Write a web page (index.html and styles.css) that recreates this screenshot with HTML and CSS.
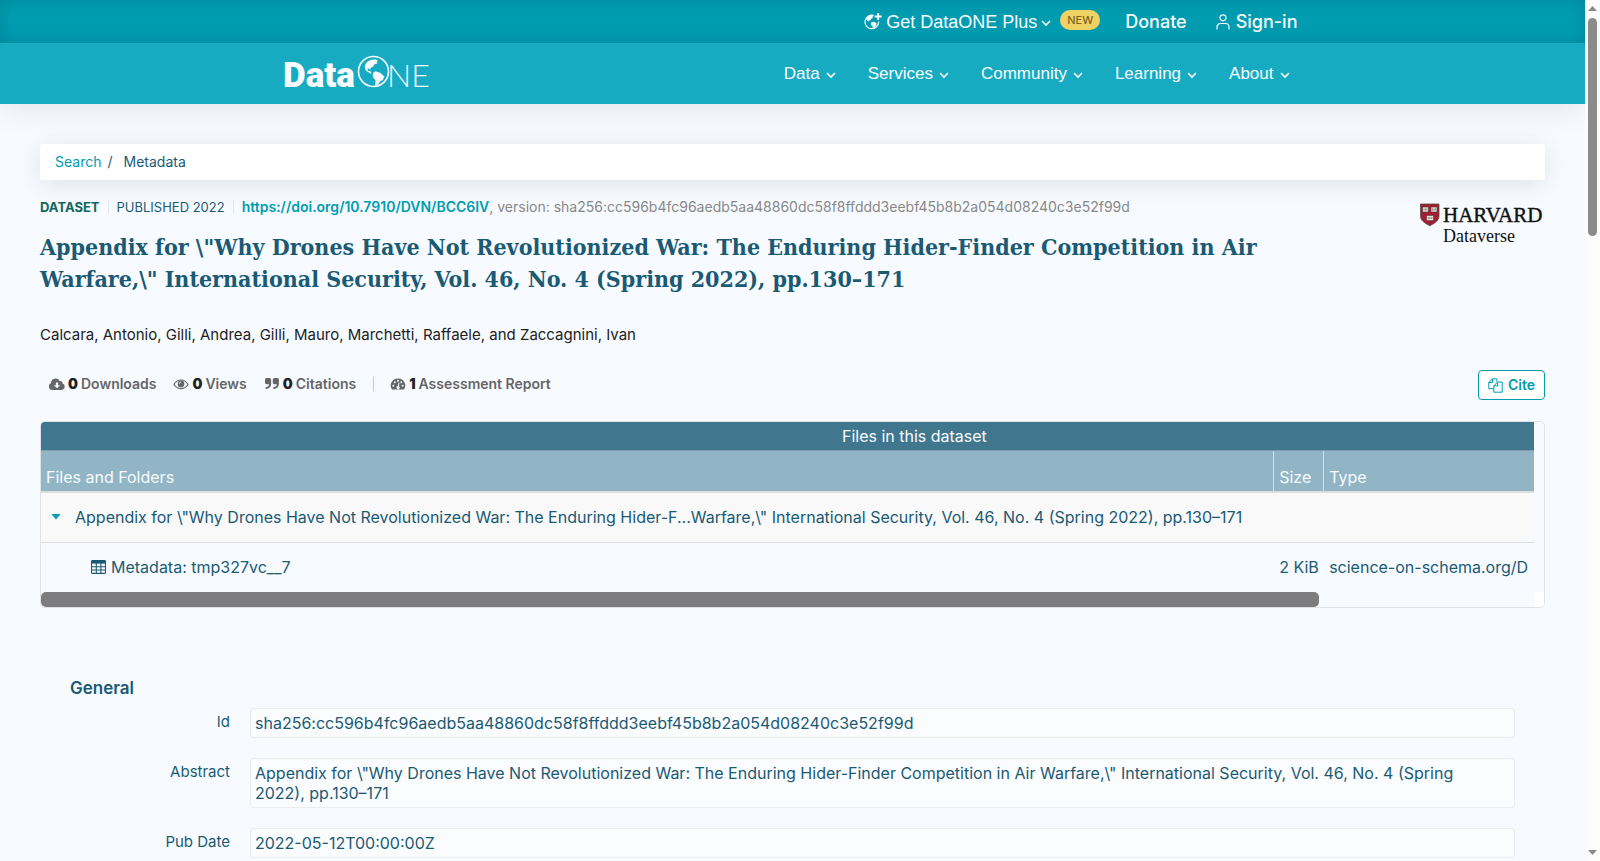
FILE: index.html
```html
<!DOCTYPE html>
<html lang="en">
<head>
<meta charset="utf-8">
<title>DataONE dataset</title>
<link rel="stylesheet" href="styles.css">
</head>
<body>
<div class="window">
  <div class="page">
    <header class="header">
      <div class="topbar">
        <nav class="wrap top-nav" aria-label="Account">
          <button type="button" class="nav-btn plus">
            <svg class="i-globe" viewBox="0 0 18 17" aria-hidden="true">
              <path d="M14.600 8.600a6.800 6.800 0 1 1-5-6.300" fill="none" stroke="currentColor" stroke-width="1.200"/>
              <path d="M14.200 0v7M10.700 3.500h7" stroke="currentColor" stroke-width="1.800"/>
              <path d="M3 4.600C4 3 6 2 8.600 2.200l1 1-1.400.7.8 1.200-2 1-.9 1.600-1.700-.3.6 1.400L3 7.600 2.200 6zM7.400 9l3-.2 2.200 1.600-.6 2.400-2 2-.9 1.200-.5-2.600L6.900 12z" fill="currentColor"/>
            </svg>
            <span>Get DataONE Plus</span>
            <svg class="chev" viewBox="0 0 10 10" aria-hidden="true"><path d="M1 3l4 4 4-4"/></svg>
          </button>
          <span class="badge">NEW</span>
          <a class="top-link donate" href="#">Donate</a>
          <a class="top-link signin" href="#">
            <svg class="i-user" viewBox="0 0 14 16" aria-hidden="true"><circle cx="7" cy="3.800" r="3"/><path d="M1 15.500V13a3.500 3.500 0 0 1 3.500-3.500h5A3.500 3.500 0 0 1 13 13v2.500"/></svg>
            <span>Sign-in</span>
          </a>
        </nav>
      </div>
      <div class="mainbar">
        <div class="wrap main-nav">
          <a class="logo" href="#" aria-label="DataONE">
            <svg viewBox="0 0 144 34" aria-hidden="true">
              <text class="logo-bold" x="-2" y="30">Data</text>
              <circle cx="88.500" cy="14.500" r="15" fill="none" stroke="currentColor" stroke-width="1.600"/>
              <path d="M80.500 7c2-3.500 6-5 10.500-4.500l2 1.200-1.500 1.300 1 1.500-3 .8-1.500 2.400-2.200.8-.5 2-1.800-1-1.200.8 1 1.600 1.800.2 1.800 2.200-1.600.2-3.800-2.600-1.500-2-.2-3zM88 16l2.500-1.800 5 1.800 3.800 3.500-1.300 3.300-3.200 2-1.600 2.600-3.200 1.600.6-5.400-2.800-3.600z" fill="currentColor"/>
              <text class="logo-thin" x="102" y="30">NE</text>
            </svg>
          </a>
          <nav class="menu" aria-label="Main">
            <button type="button" class="nav-btn">Data<svg class="chev" viewBox="0 0 10 10" aria-hidden="true"><path d="M1 3l4 4 4-4"/></svg></button>
            <button type="button" class="nav-btn">Services<svg class="chev" viewBox="0 0 10 10" aria-hidden="true"><path d="M1 3l4 4 4-4"/></svg></button>
            <button type="button" class="nav-btn">Community<svg class="chev" viewBox="0 0 10 10" aria-hidden="true"><path d="M1 3l4 4 4-4"/></svg></button>
            <button type="button" class="nav-btn">Learning<svg class="chev" viewBox="0 0 10 10" aria-hidden="true"><path d="M1 3l4 4 4-4"/></svg></button>
            <button type="button" class="nav-btn">About<svg class="chev" viewBox="0 0 10 10" aria-hidden="true"><path d="M1 3l4 4 4-4"/></svg></button>
          </nav>
        </div>
      </div>
    </header>

    <main class="content">
      <nav class="crumbs" aria-label="Breadcrumb">
        <a href="#">Search</a><span>/</span><span class="here">Metadata</span>
      </nav>

      <section class="intro">
        <div class="intro-text">
          <p class="meta"><strong class="kind">DATASET</strong><span class="rule"></span><span class="published">PUBLISHED 2022</span><span class="rule"></span><span class="cite-id"><a href="#">https://doi.org/10.7910/DVN/BCC6IV</a>, version: sha256:cc596b4fc96aedb5aa48860dc58f8ffddd3eebf45b8b2a054d08240c3e52f99d</span></p>
          <h1 class="title">Appendix for \"Why Drones Have Not Revolutionized War: The Enduring Hider-Finder Competition in Air Warfare,\" International Security, Vol. 46, No. 4 (Spring 2022), pp.130–171</h1>
        </div>
        <svg class="harvard" viewBox="0 0 125 42" role="img" aria-label="Harvard Dataverse">
          <path d="M.5 1h18.500v12c0 4.500-4 7-9.200 9.800C4.500 20 .5 17.500 .5 13z" fill="#a51c30" stroke="#544b45" stroke-width=".8"/>
          <g fill="#e8e4dd" stroke="#4d3a36" stroke-width=".6"><path d="M2.500 4h6v5h-6zM11 4h6v5h-6zM6.500 12.500h7v5h-7z"/><path d="M4 5.500v2M5.500 5.500v2M7 5.500v2M12.500 5.500v2M14 5.500v2M15.500 5.500v2M8.200 14v2M10 14v2M11.800 14v2"/></g>
          <text class="hv-big" x="23" y="19">HARVARD</text>
          <text class="hv-small" x="23" y="39">Dataverse</text>
        </svg>
      </section>

      <p class="authors">Calcara, Antonio, Gilli, Andrea, Gilli, Mauro, Marchetti, Raffaele, and Zaccagnini, Ivan</p>

      <section class="actions">
        <ul class="metrics">
          <li><svg viewBox="0 0 16 14" aria-hidden="true"><path fill-rule="evenodd" d="M3.500 13A3.500 3.500 0 0 1 2 6.300 4.600 4.600 0 0 1 10.600 4a2.400 2.400 0 0 1 2.900 2.600A3.300 3.300 0 0 1 12.700 13zM6.900 5.500v2.700h-2L8 11.300l3.100-3.100h-2V5.500z"/></svg><b>0</b><span>Downloads</span></li>
          <li><svg viewBox="0 0 16 14" aria-hidden="true"><path d="M1 7.500C4.500 1.500 11.500 1.500 15 7.500 11.500 13 4.500 13 1 7.500z" fill="none" stroke="currentColor" stroke-width="1.200"/><circle cx="8" cy="6.900" r="3.300"/><path d="M6.200 6.800A1.900 1.900 0 0 1 8 5" fill="none" stroke="#f7fbff" stroke-width=".9"/></svg><b>0</b><span>Views</span></li>
          <li><svg viewBox="0 0 16 14" aria-hidden="true"><path d="M2.500 1h3A1.600 1.600 0 0 1 7.100 2.600V7A5 5 0 0 1 2.100 12h-.5v-1.900h.5A3 3 0 0 0 5 7.300H2.600A1.700 1.700 0 0 1 1 5.600V2.600A1.600 1.600 0 0 1 2.500 1zM10.300 1h3A1.600 1.600 0 0 1 14.900 2.600V7a5 5 0 0 1-5 5h-.5v-1.900h.5a3 3 0 0 0 2.900-2.800h-2.400a1.700 1.700 0 0 1-1.600-1.700V2.600A1.600 1.600 0 0 1 10.300 1z"/></svg><b>0</b><span>Citations</span></li>
          <li class="assess"><svg viewBox="0 0 16 14" aria-hidden="true"><path d="M8 1.500a7 7 0 0 0-6 11h12a7 7 0 0 0-6-11z"/><g fill="#f7fbff"><circle cx="3.300" cy="8.700" r="1"/><circle cx="4.800" cy="5.200" r="1"/><circle cx="8" cy="3.800" r="1"/><circle cx="11.300" cy="5.200" r="1"/><circle cx="12.700" cy="8.700" r="1"/><path d="M8.600 5.500l.9.200-.6 3.500a1.600 1.600 0 1 1-1.200-.2z"/></g></svg><b>1</b><span>Assessment Report</span></li>
        </ul>
        <button type="button" class="cite"><svg viewBox="0 0 15 15" aria-hidden="true"><path d="M4.500.800h4.300v3M4.500.800L.800 4.500v6.200h5M4.500.800v3.700H.800M9.700 4h4.500v10.200H5.800V7.900zM9.700 4v3.900H5.800"/></svg>Cite</button>
      </section>

      <section class="files">
        <div class="files-view">
          <table class="files-table">
            <colgroup><col><col class="c-size"><col class="c-type"></colgroup>
            <caption>Files in this dataset</caption>
            <thead><tr><th scope="col">Files and Folders</th><th scope="col">Size</th><th scope="col">Type</th></tr></thead>
            <tbody>
              <tr class="folder"><td colspan="3"><div class="cell"><button type="button" class="toggle" aria-label="Collapse folder"></button><span>Appendix for \"Why Drones Have Not Revolutionized War: The Enduring Hider-F...Warfare,\" International Security, Vol. 46, No. 4 (Spring 2022), pp.130–171</span></div></td></tr>
              <tr class="file"><td><div class="cell file-name"><svg class="i-table" viewBox="0 0 15 14" aria-hidden="true"><path d="M1.500.600h12a1 1 0 0 1 1 1V12.400a1 1 0 0 1-1 1h-12a1 1 0 0 1-1-1V1.600a1 1 0 0 1 1-1zM.500 6.700h14M.500 10h14M5.300 2.500v11M9.900 2.500v11" fill="none" stroke="currentColor" stroke-width="1.100"/><path d="M.500.600h14v3H.500z" fill="currentColor"/></svg><span>Metadata: tmp327vc__7</span></div></td><td>2 KiB</td><td>science-on-schema.org/D</td></tr>
            </tbody>
          </table>
        </div>
        <div class="hscroll"><div class="hthumb"></div></div>
      </section>

      <section class="general">
        <h2>General</h2>
        <dl>
          <dt>Id</dt><dd>sha256:cc596b4fc96aedb5aa48860dc58f8ffddd3eebf45b8b2a054d08240c3e52f99d</dd>
          <dt>Abstract</dt><dd>Appendix for \"Why Drones Have Not Revolutionized War: The Enduring Hider-Finder Competition in Air Warfare,\" International Security, Vol. 46, No. 4 (Spring 2022), pp.130–171</dd>
          <dt>Pub Date</dt><dd>2022-05-12T00:00:00Z</dd>
        </dl>
      </section>
    </main>
  </div>
  <div class="vscroll" aria-hidden="true"><span class="arrow up"></span><div class="track"><div class="vthumb"></div></div><span class="arrow down"></span></div>
</div>
</body>
</html>
```
FILE: styles.css
```css
* { box-sizing: border-box; }
body { margin: 0; background: #f7fbff; color: #1a5a74; font: 16px/20px Inter, "Open Sans", sans-serif; }
a { color: #019cb0; text-decoration: none; }
button { font: inherit; color: inherit; background: none; border: 0; padding: 0; }
h1, h2, p, ul, dl, dd { margin: 0; }
.window { display: grid; grid-template-columns: minmax(0, 1fr) 15px; height: 100vh; }
.page { overflow: hidden; }

.header { color: #f7fbff; box-shadow: 0 2px 32px rgba(0, 0, 0, .1); }
.wrap { max-width: 1016px; margin: 0 auto; display: flex; align-items: center; }
.topbar { background: #019cb0; box-shadow: inset 0 0 16px rgba(0, 70, 90, .25); }
.top-nav { height: 43px; justify-content: flex-end; padding-right: 3px; }
.nav-btn { display: flex; align-items: center; gap: 6px; font: 17px/20px "Liberation Sans", Arial, sans-serif; }
.plus { gap: 4px; font-size: 18px; }
.chev { width: 10px; height: 10px; margin-top: 2px; fill: none; stroke: currentColor; stroke-width: 1.6; }
.i-globe { width: 18px; height: 17px; }
.badge { margin: 0 25px 3px 9px; padding: 0 7px; border-radius: 10px; background: #f0d264; color: #7a6820; font-size: 11px; font-weight: 500; line-height: 20px; }
.top-link { color: #f7fbff; font-size: 18px; font-weight: 500; line-height: 22px; }
.signin { display: flex; align-items: center; gap: 6px; margin-left: 29px; }
.i-user { width: 14px; height: 16px; fill: none; stroke: currentColor; stroke-width: 1.2; }
.mainbar { background: #17abc1; }
.main-nav { height: 61px; justify-content: space-between; }
.logo { color: #f7fbff; }
.logo svg { display: block; width: 144px; height: 34px; fill: currentColor; overflow: visible; }
.logo-bold { font: 900 35px Roboto, sans-serif; }
.logo-thin { font: 300 32px Lato, sans-serif; }
.menu { display: flex; gap: 32px; padding-right: 11px; }

.content { padding: 40px 40px 0; }
.crumbs { display: flex; gap: 6px; padding: 8px 15px; background: #fff; border-radius: 3px; box-shadow: 0 4px 24px rgba(0, 0, 0, .1); font-size: 14px; }
.here { margin-left: 5px; }
.intro { display: flex; justify-content: space-between; align-items: flex-start; padding-top: 17px; }
.intro-text { flex: 0 1 1270px; }
.meta { display: flex; align-items: center; font-size: 13px; }
.kind { color: #12665c; }
.rule { width: 1px; height: 14px; margin: 0 8px; background: #e4e6e8; }
.cite-id { color: #888; font-size: 14px; }
.cite-id a { font-weight: 600; }
.title { margin-top: 14px; font: 700 23px/32px "DejaVu Serif Condensed", "DejaVu Serif", serif; }
.harvard { width: 125px; height: 42px; margin-top: 6px; flex: none; }
.hv-big { font: 21px "Liberation Serif", serif; fill: #111; stroke: #111; stroke-width: .4; }
.hv-small { font: 18px "Liberation Serif", serif; fill: #111; }
.authors { margin-top: 30px; color: #222; font-size: 15px; }
.actions { display: flex; justify-content: space-between; align-items: center; margin-top: 25px; }
.metrics { display: flex; list-style: none; padding: 0 0 2px 9px; gap: 17px; color: #666; font-size: 14px; font-weight: 600; }
.metrics li { display: flex; align-items: center; gap: 3px; }
.metrics svg { width: 16px; height: 14px; fill: currentColor; }
.metrics b { color: #222; }
.metrics .assess { position: relative; padding-left: 17px; }
.assess::before { content: ""; position: absolute; left: 0; top: 3px; width: 1px; height: 14px; background: #c8cacc; }
.cite { display: flex; align-items: center; gap: 5px; height: 30px; padding: 0 9px; border: 1px solid #019cb0; border-radius: 4px; background: #fff; color: #019cb0; font-size: 14px; font-weight: 600; }
.cite svg { width: 15px; height: 15px; fill: none; stroke: currentColor; stroke-width: 1; }

.files { margin-top: 21px; border: 1px solid #dfe3e6; border-radius: 5px; overflow: hidden; }
.files-view { margin-right: 10px; overflow: hidden; }
.files-table { width: 117%; table-layout: fixed; border-collapse: separate; border-spacing: 0; }
.files-table caption { height: 29px; padding: 4px; background: #40778f; color: #f7fbff; border-bottom: 1px solid #7f9dab; }
.c-size { width: 50px; }
.c-type { width: 26.6%; }
.files-table th { height: 42px; padding: 0 5px 4px; vertical-align: bottom; text-align: left; font-weight: 400; white-space: nowrap; background: #91b5c5; color: #f7fbff; border-bottom: 2px solid #dcdddd; }
.files-table th + th { border-left: 1px solid #ddd; }
.files-table td { height: 49px; padding: 0 0 2px 5px; white-space: nowrap; overflow: hidden; }
.files-table .folder td { height: 50px; background: #f9f9f9; border-bottom: 1px solid #ddd; }
.files-table .file td + td { padding-left: 6px; }
.cell { display: flex; align-items: center; gap: 14px; padding-left: 5px; }
.toggle { width: 10px; height: 6px; background: #019cb0; clip-path: polygon(0 0, 100% 0, 50% 100%); }
.file-name { gap: 5px; padding-left: 45px; }
.i-table { width: 15px; height: 14px; }
.hscroll { height: 15px; background: linear-gradient(to left, #fff 10px, transparent 10px); }
.hthumb { width: 85%; height: 100%; border-radius: 5px; background: #7d7d7f; }

.general { padding: 70px 30px 40px; }
.general h2 { font-size: 17px; line-height: 20px; font-weight: 600; }
.general dl { display: grid; grid-template-columns: 160px minmax(0, 1fr); gap: 20px; margin-top: 10px; }
.general dt { padding-top: 4px; text-align: right; font-size: 15px; }
.general dd { padding: 4px 20px 4px 4px; border: 1px solid #eaecee; border-radius: 3px; background: #fbfcfe; }

.vscroll { display: flex; flex-direction: column; align-items: center; padding: 6px 0; background: #fcfcfc; }
.track { flex: 1; padding-top: 7px; }
.vthumb { width: 9px; height: 218px; border-radius: 5px; background: #8b8b8b; }
.arrow { width: 9px; height: 5px; background: #8b8b8b; clip-path: polygon(0 0, 100% 0, 50% 100%); }
.arrow.up { clip-path: polygon(50% 0, 100% 100%, 0 100%); }
```
